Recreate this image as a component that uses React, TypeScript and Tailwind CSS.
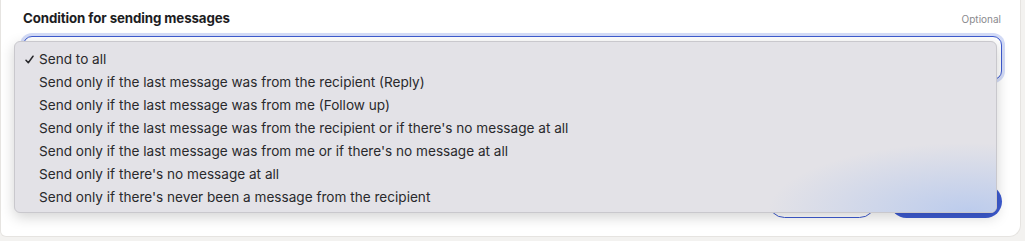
import React from 'react';

const options = [
  'Send to all',
  'Send only if the last message was from the recipient (Reply)',
  'Send only if the last message was from me (Follow up)',
  "Send only if the last message was from the recipient or if there's no message at all",
  "Send only if the last message was from me or if there's no message at all",
  "Send only if there's no message at all",
  "Send only if there's never been a message from the recipient",
];

const CheckIcon: React.FC = () => (
  <svg width="9" height="9" viewBox="0 0 9 9" fill="none" stroke="#29292c" strokeWidth="1.5" strokeLinecap="round" strokeLinejoin="round">
    <path d="M1 5.2 L3.3 7.8 L8 1.2" />
  </svg>
);

const App: React.FC = () => {
  const selected = 0;

  return (
    <div className="relative w-[1025px] h-[241px] bg-[#f3f2f0] overflow-hidden font-['Inter',sans-serif]">
      {/* card */}
      <div className="w-[1021px] h-[237px] bg-white rounded-br-[12px] rounded-bl-[6px] border-r border-b border-l border-[#e6e4e1] pl-[22px] pr-[18px] pt-[10px] flex flex-col">
        <div className="flex items-center justify-between h-[18px]">
          <span className="text-[13.3px] font-bold text-[#1d1d1f] tracking-[-0.1px]">
            Condition for sending messages
          </span>
          <span className="text-[10px] text-[#8a8a8e] mr-[1px]">Optional</span>
        </div>
        <div className="mt-[8px] h-[44px] rounded-[9px] border border-[#3e5bcf] ring-[3px] ring-[#d3dbf7] bg-white" />
        <div className="flex-1" />
        <div className="flex justify-end gap-[14px] mb-[18px]">
          <div className="w-[108px] h-[33px] rounded-full border border-[#3e5bcf] bg-white" />
          <div className="w-[112px] h-[33px] rounded-full bg-[#3d5bd1]" />
        </div>
      </div>

      {/* native select popup */}
      <div className="absolute left-[14px] top-[41px] w-[983px] h-[172px] rounded-[6px] border border-[#c9c8cd] bg-[#e3e2e7] shadow-[0_4px_14px_rgba(0,0,0,0.18)] overflow-hidden pt-[6px]">
        <div className="absolute right-0 bottom-0 w-[230px] h-[70px] bg-[radial-gradient(ellipse_at_88%_100%,rgba(178,198,238,0.8),rgba(227,226,231,0)_70%)]" />
        <ul className="relative flex flex-col">
          {options.map((o, i) => (
            <li key={o} className="h-[23px] flex items-center text-[13.6px] text-[#29292c]">
              <span className="w-[24px] pl-[10px] flex items-center">
                {i === selected ? <CheckIcon /> : null}
              </span>
              {o}
            </li>
          ))}
        </ul>
      </div>
    </div>
  );
};

export default App;
